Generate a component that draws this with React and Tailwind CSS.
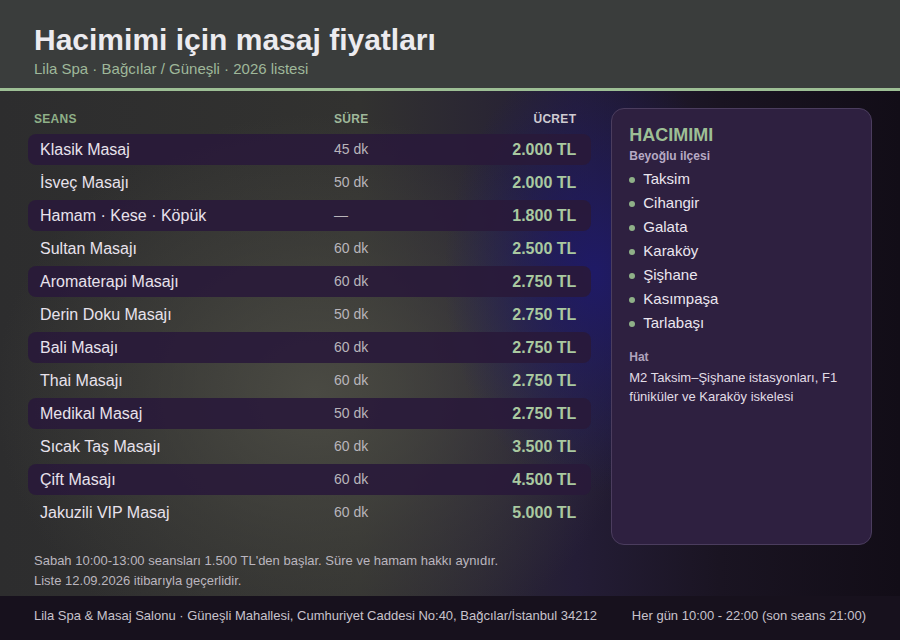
import React from 'react';

const seanslar = [
    { ad: "Klasik Masaj", sure: "45 dk", ucret: "2.000 TL" },
    { ad: "İsveç Masajı", sure: "50 dk", ucret: "2.000 TL" },
    { ad: "Hamam · Kese · Köpük", sure: "—", ucret: "1.800 TL" },
    { ad: "Sultan Masajı", sure: "60 dk", ucret: "2.500 TL" },
    { ad: "Aromaterapi Masajı", sure: "60 dk", ucret: "2.750 TL" },
    { ad: "Derin Doku Masajı", sure: "50 dk", ucret: "2.750 TL" },
    { ad: "Bali Masajı", sure: "60 dk", ucret: "2.750 TL" },
    { ad: "Thai Masajı", sure: "60 dk", ucret: "2.750 TL" },
    { ad: "Medikal Masaj", sure: "50 dk", ucret: "2.750 TL" },
    { ad: "Sıcak Taş Masajı", sure: "60 dk", ucret: "3.500 TL" },
    { ad: "Çift Masajı", sure: "60 dk", ucret: "4.500 TL" },
    { ad: "Jakuzili VIP Masaj", sure: "60 dk", ucret: "5.000 TL" },
];

const semtler = ["Taksim", "Cihangir", "Galata", "Karaköy", "Şişhane", "Kasımpaşa", "Tarlabaşı"];

export default function App() {
    return (
        <div className="w-[900px] h-[640px] flex flex-col overflow-hidden font-['Liberation_Sans',Arial,sans-serif] bg-[#1a1420]">

            {/* Başlık */}
            <header className="h-[91px] shrink-0 bg-[#3a3d3c] border-b-[3px] border-[#9dbf95] px-[34px] pt-[22px]">
                <h1 className="text-[30px] leading-[36px] font-bold text-[#ecebef]">
                    Hacimimi için masaj fiyatları
                </h1>
                <p className="text-[15px] leading-[18px] text-[#9fb89a] mt-[2px]">
                    Lila Spa · Bağcılar / Güneşli · 2026 listesi
                </p>
            </header>

            {/* Fiyat listesi + bölge kartı */}
            <main className="flex-1 flex flex-col px-[28px] pt-[17px] bg-[radial-gradient(ellipse_150px_220px_at_66%_36%,#1f1a66_0%,rgba(31,26,102,0.55)_45%,transparent_100%),radial-gradient(ellipse_320px_280px_at_35%_60%,#4a4a43_0%,rgba(74,74,67,0.4)_55%,transparent_100%),linear-gradient(90deg,#2d2d2e_0%,#323230_40%,#241d36_64%,#1a1422_80%,#120d17_100%)]">
                <div className="flex gap-[20px]">
                    <div className="w-[564px] flex flex-col">
                        <div className="h-[22px] mb-[4px] flex items-center px-[6px] pr-[15px] text-[12px] font-bold tracking-[0.3px]">
                            <span className="w-[300px] text-[#8fb088]">SEANS</span>
                            <span className="flex-1 text-[#9fb89a]">SÜRE</span>
                            <span className="text-[#cfcbd2]">ÜCRET</span>
                        </div>
                        <div className="flex flex-col gap-[2px]">
                            {seanslar.map((s, i) => (
                                <div
                                    key={i}
                                    className={
                                        "h-[31px] flex items-center pl-[12px] pr-[15px] rounded-[8px] " +
                                        (i % 2 === 0 ? "bg-[#29193a]/90" : "")
                                    }
                                >
                                    <span className="w-[294px] text-[16px] text-[#e8e2ec]">{s.ad}</span>
                                    <span className="flex-1 text-[14px] text-[#b9b5bb]">{s.sure}</span>
                                    <span className="text-[16px] font-bold text-[#a9c9a0]">{s.ucret}</span>
                                </div>
                            ))}
                        </div>
                    </div>

                    {/* Bölge kartı */}
                    <aside className="w-[261px] h-[437px] rounded-[13px] bg-[#2e2040] border border-[#4b3d5e] px-[17px] pt-[15px]">
                        <h2 className="text-[18px] leading-[22px] font-bold text-[#9dbf95]">HACIMIMI</h2>
                        <p className="text-[12px] leading-[16px] font-bold text-[#b7aac4] mt-[2px]">Beyoğlu ilçesi</p>
                        <ul className="mt-[3px] flex flex-col">
                            {semtler.map((s) => (
                                <li key={s} className="h-[24px] flex items-center gap-[8px] text-[15px] text-[#ebe6ef]">
                                    <span className="w-[6px] h-[6px] rounded-full bg-[#8fb088] mt-[2px]"></span>
                                    {s}
                                </li>
                            ))}
                        </ul>
                        <p className="mt-[14px] text-[12px] leading-[16px] font-bold text-[#b0a3bd]">Hat</p>
                        <p className="mt-[3px] text-[13px] leading-[19px] text-[#e2dde6]">
                            M2 Taksim–Şişhane istasyonları, F1 füniküler ve Karaköy iskelesi
                        </p>
                    </aside>
                </div>

                <div className="mt-[6px] px-[6px] text-[13px] leading-[20px] text-[#bbb6bf]">
                    <p>Sabah 10:00-13:00 seansları 1.500 TL'den başlar. Süre ve hamam hakkı aynıdır.</p>
                    <p>Liste 12.09.2026 itibarıyla geçerlidir.</p>
                </div>
            </main>

            {/* Alt bilgi */}
            <footer className="h-[44px] shrink-0 bg-[#17111d] flex items-center justify-between px-[34px] pb-[5px] text-[13px] text-[#c8c3cc]">
                <span>Lila Spa &amp; Masaj Salonu · Güneşli Mahallesi, Cumhuriyet Caddesi No:40, Bağcılar/İstanbul 34212</span>
                <span>Her gün 10:00 - 22:00 (son seans 21:00)</span>
            </footer>
        </div>
    );
}
